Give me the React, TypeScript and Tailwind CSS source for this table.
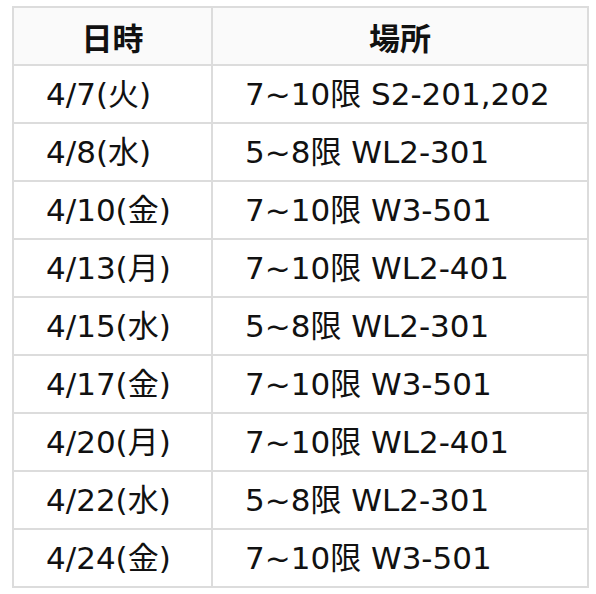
import React from "react";

interface Row {
  date: string;
  place: string;
}

const ROWS: Row[] = [
  { date: "4/7(火)", place: "7~10限 S2-201,202" },
  { date: "4/8(水)", place: "5~8限 WL2-301" },
  { date: "4/10(金)", place: "7~10限 W3-501" },
  { date: "4/13(月)", place: "7~10限 WL2-401" },
  { date: "4/15(水)", place: "5~8限 WL2-301" },
  { date: "4/17(金)", place: "7~10限 W3-501" },
  { date: "4/20(月)", place: "7~10限 WL2-401" },
  { date: "4/22(水)", place: "5~8限 WL2-301" },
  { date: "4/24(金)", place: "7~10限 W3-501" },
];

export default function App() {
  return (
    <div
      className="min-h-screen bg-white pt-[6px] pl-[12px]"
      style={{ fontFamily: '"DejaVu Sans", "Noto Sans CJK JP", sans-serif' }}
    >
      <table className="border-collapse text-[31px] leading-none text-[#111]">
        <thead>
          <tr className="h-[58px] bg-[#fafafa]">
            <th
              className="w-[199px] border-2 border-[#dcdcdc] text-center font-bold"
              style={{ fontFamily: '"Noto Sans CJK JP", sans-serif' }}
            >
              日時
            </th>
            <th
              className="w-[376px] border-2 border-[#dcdcdc] text-center font-bold"
              style={{ fontFamily: '"Noto Sans CJK JP", sans-serif' }}
            >
              場所
            </th>
          </tr>
        </thead>
        <tbody>
          {ROWS.map((r) => (
            <tr key={r.date} className="h-[58px]">
              <td className="border-2 border-[#dcdcdc] pl-[32px] text-left">{r.date}</td>
              <td className="border-2 border-[#dcdcdc] pl-[32px] text-left">{r.place}</td>
            </tr>
          ))}
        </tbody>
      </table>
    </div>
  );
}
